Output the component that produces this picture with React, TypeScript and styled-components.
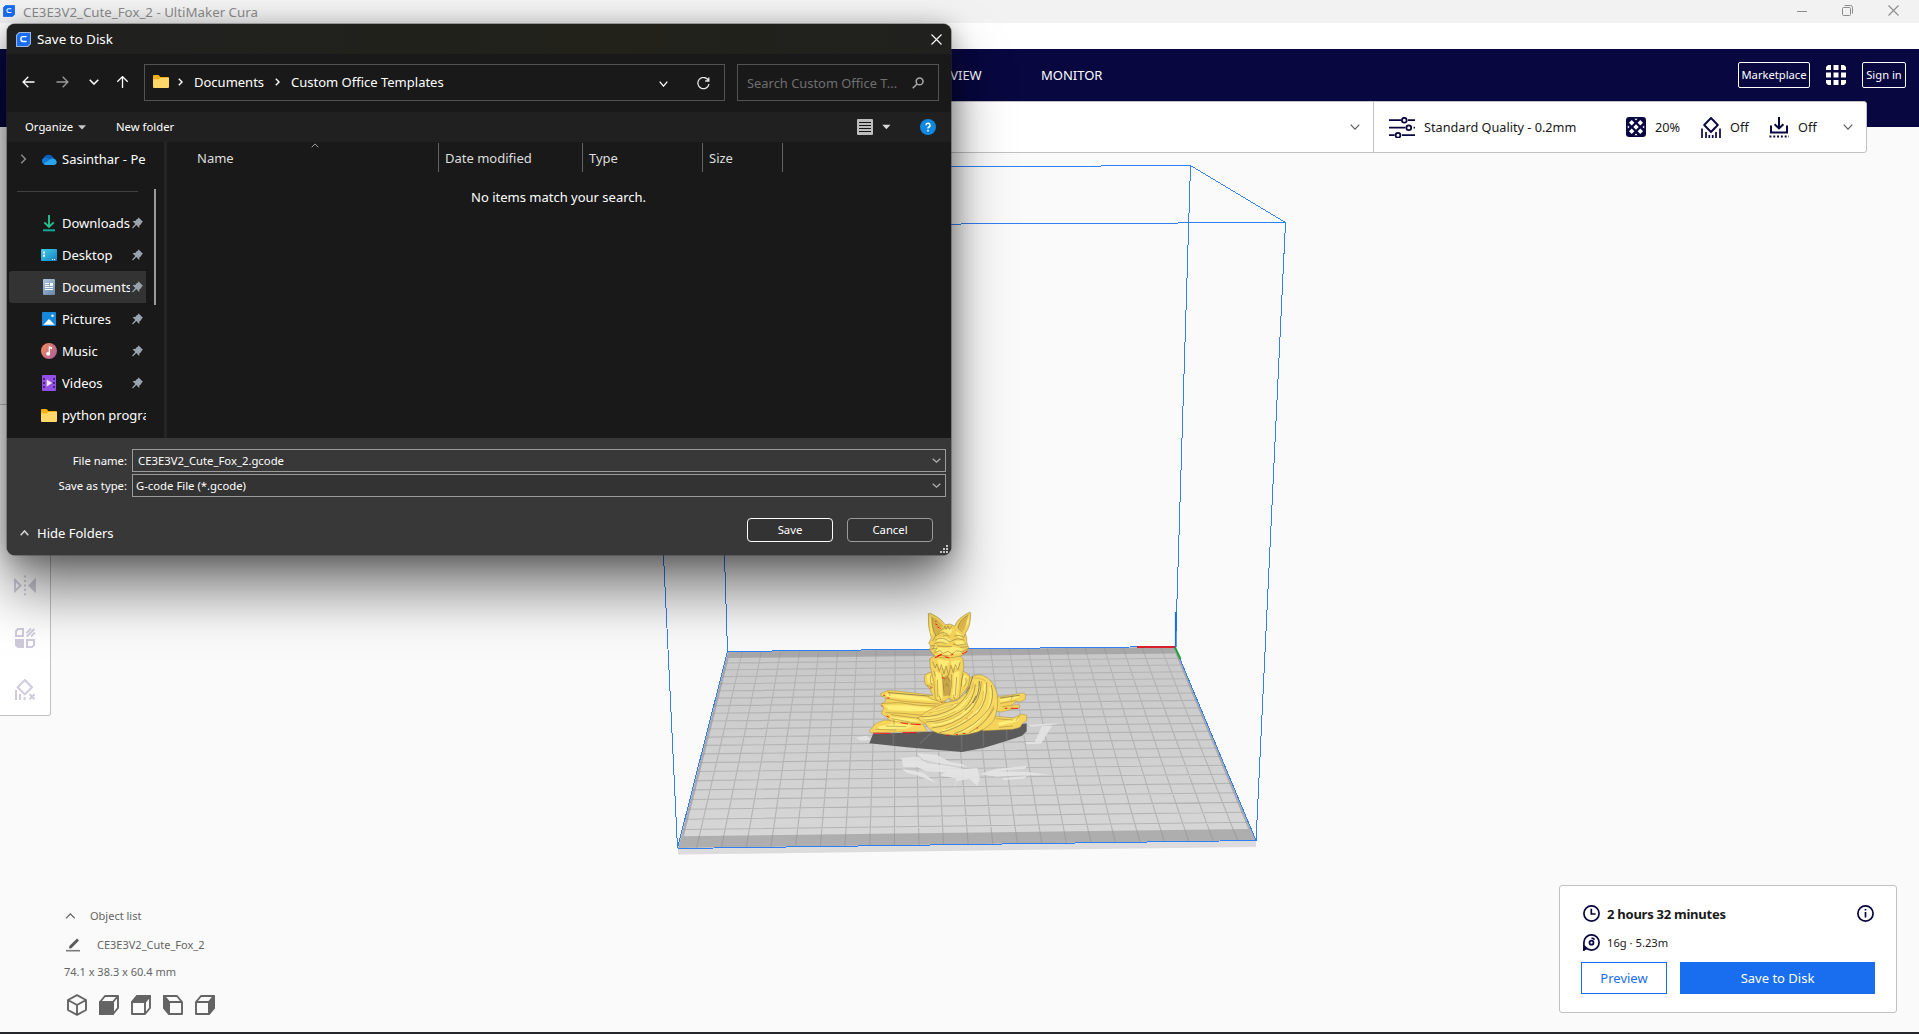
import React from "react";
import styled, { createGlobalStyle } from "styled-components";

const navy = "#08073f";
const blue = "#196ef0";
const line = "#c0c1c2";

const GlobalStyle = createGlobalStyle`
  * { box-sizing: border-box; }
  html, body { margin: 0; padding: 0; overflow: hidden; }
  body { font-family: "Noto Sans", "Open Sans", sans-serif; font-size: 13px; color: #191919; }
  svg { display: block; flex: none; }
  button { font-family: inherit; padding: 0; margin: 0; white-space: nowrap; }
`;

/* ---------- application window ---------- */

const Screen = styled.div`
  position: relative;
  width: 1919px;
  height: 1034px;
  display: flex;
  flex-direction: column;
  overflow: hidden;
  background: #fafafa;
`;

const WindowBar = styled.header`
  height: 23px;
  flex: none;
  display: flex;
  align-items: center;
  padding: 0 20px 2px 3px;
  background: #f2f2f2;
`;

const WindowTitle = styled.span`
  margin-left: 8px;
  padding-top: 2px;
  flex: 1;
  font-size: 13.3px;
  line-height: 18px;
  color: #8c8c8c;
  white-space: nowrap;
`;

const WindowControls = styled.div`
  display: flex;
  align-items: center;
  gap: 35px;
`;

const MenuStrip = styled.div`
  height: 26px;
  flex: none;
  background: #fff;
`;

const MainHeader = styled.nav`
  height: 52px;
  flex: none;
  display: flex;
  align-items: center;
  padding: 0 13px 0 927px;
  background: ${navy};
  color: #fff;
`;

const StageTab = styled.span<{ $width: number }>`
  width: ${(p) => p.$width}px;
  font-size: 13px;
  line-height: 18px;
`;

const HeaderActions = styled.div`
  margin-left: auto;
  display: flex;
  align-items: center;
  gap: 16px;
`;

const OutlineButton = styled.button<{ $width: number }>`
  width: ${(p) => p.$width}px;
  height: 26px;
  border: 1px solid #fff;
  border-radius: 2px;
  background: transparent;
  color: #fff;
  font-size: 11.2px;
  line-height: 16px;
`;

const Stage = styled.main`
  position: relative;
  flex: 1;
  display: flex;
  flex-direction: column;
  background: linear-gradient(${navy} 26px, #fafafa 26px);
`;

const SceneLayer = styled.svg`
  position: absolute;
  left: 0;
  top: 0;
`;

const ConfigBar = styled.section`
  position: relative;
  height: 52px;
  width: 1827px;
  margin-left: 40px;
  flex: none;
  display: flex;
  border: 1px solid ${line};
  border-radius: 3px;
  background: #fff;
`;

const MaterialPane = styled.div`
  width: 1333px;
  display: flex;
  align-items: center;
  justify-content: flex-end;
  padding-right: 13px;
  border-right: 1px solid ${line};
`;

const ProfilePane = styled.div`
  flex: 1;
  display: flex;
  align-items: center;
  padding: 0 13px 0 15px;
`;

const ProfileText = styled.span<{ $width: number; $gap: number }>`
  width: ${(p) => p.$width}px;
  margin-left: ${(p) => p.$gap}px;
  font-size: 12.7px;
  line-height: 18px;
  white-space: nowrap;
`;

const ChevronSlot = styled.div`
  margin-left: auto;
`;

const ToolPanel = styled.aside`
  position: relative;
  width: 51px;
  height: 312px;
  margin-top: 251px;
  display: flex;
  flex-direction: column;
  justify-content: flex-end;
  border: 1px solid ${line};
  border-left: none;
  border-radius: 0 3px 3px 0;
  background: #fff;
`;

const ToolButton = styled.div`
  height: 52px;
  display: flex;
  align-items: center;
  padding: 1px 0 0 14px;
`;

const StageFooter = styled.div`
  position: relative;
  margin-top: auto;
  display: flex;
  align-items: flex-end;
  justify-content: space-between;
  padding: 0 22px 19px 64px;
`;

const ObjectPanel = styled.section`
  display: flex;
  flex-direction: column;
  height: 128px;
  padding-top: 22px;
  color: #646464;
  font-size: 11px;
`;

const ObjectRow = styled.div<{ $height: number; $gap: number }>`
  height: ${(p) => p.$height}px;
  flex: none;
  display: flex;
  align-items: center;
  gap: ${(p) => p.$gap}px;
  line-height: 16px;
`;

const CubeRow = styled.div`
  display: flex;
  gap: 12px;
  margin: 16px 0 0 3px;
`;

const ActionPanel = styled.section`
  width: 338px;
  height: 128px;
  display: flex;
  flex-direction: column;
  padding: 13px 22px 18px 21px;
  border: 1px solid ${line};
  border-radius: 3px;
  background: #fff;
`;

const EstimateRow = styled.div<{ $size: number; $bold?: boolean }>`
  height: 29px;
  display: flex;
  align-items: center;
  padding-left: 2px;
  gap: 7px;
  font-size: ${(p) => p.$size}px;
  font-weight: ${(p) => (p.$bold ? 700 : 400)};
  letter-spacing: ${(p) => (p.$bold ? -0.25 : 0)}px;
`;

const ActionButtons = styled.div`
  display: flex;
  gap: 13px;
  margin: 5px -1px 0 0;
`;

const ActionButton = styled.button<{ $primary?: boolean }>`
  width: ${(p) => (p.$primary ? 195 : 86)}px;
  height: 32px;
  border: 1px solid ${blue};
  background: ${(p) => (p.$primary ? blue : "#fff")};
  color: ${(p) => (p.$primary ? "#fff" : blue)};
  font-size: 13px;
  line-height: 18px;
`;

const DesktopEdge = styled.div`
  height: 2px;
  flex: none;
  background: #24262c;
`;

/* ---------- save dialog ---------- */

const Dialog = styled.div`
  position: absolute;
  left: 7px;
  top: 24px;
  width: 944px;
  height: 531px;
  display: flex;
  flex-direction: column;
  border-radius: 8px;
  background: #191919;
  color: #fff;
  font-size: 13px;
  box-shadow: 0 0 0 1px rgba(60, 60, 60, 0.4), 0 36px 56px rgba(0, 0, 0, 0.5), 0 4px 26px rgba(0, 0, 0, 0.32);
`;

const DialogTitle = styled.div`
  height: 30px;
  flex: none;
  display: flex;
  align-items: center;
  padding: 0 9px 0 9px;
  border-radius: 8px 8px 0 0;
  background: linear-gradient(90deg, #202020 0%, #21211c 40%, #22221b 65%, #20201e 100%);
`;

const DialogName = styled.span`
  flex: 1;
  margin-left: 6px;
  font-size: 13.4px;
  line-height: 18px;
`;

const NavRow = styled.div`
  height: 58px;
  flex: none;
  display: flex;
  align-items: center;
  padding: 0 12px 1px 15px;
`;

const NavIcons = styled.div`
  width: 122px;
  display: grid;
  grid-template-columns: 34px 33px 27px 1fr;
  align-items: center;
  padding-bottom: 2px;
`;

const AddressBox = styled.div`
  width: 581px;
  height: 37px;
  display: flex;
  align-items: center;
  border: 1px solid #535353;
  padding: 0 14px 2px 8px;
`;

const Crumb = styled.span<{ $width: number }>`
  width: ${(p) => p.$width}px;
  margin-left: 11px;
  line-height: 18px;
  white-space: nowrap;
`;

const AddressTools = styled.div`
  margin-left: auto;
  display: flex;
  align-items: center;
  gap: 29px;
  padding-top: 4px;
`;

const SearchBox = styled.div`
  width: 202px;
  height: 37px;
  margin-left: 12px;
  display: flex;
  align-items: center;
  justify-content: space-between;
  border: 1px solid #535353;
  padding: 0 14px 0 9px;
  font-size: 12.9px;
  color: #6f6f6f;
  white-space: nowrap;
`;

const CommandBar = styled.div`
  height: 30px;
  flex: none;
  display: flex;
  align-items: center;
  padding: 0 15px 0 18px;
  background: #202020;
  font-size: 11.3px;
`;

const Command = styled.span<{ $width: number }>`
  width: ${(p) => p.$width}px;
  display: flex;
  align-items: center;
  gap: 5px;
  line-height: 16px;
`;

const CommandTools = styled.div`
  margin-left: auto;
  display: flex;
  align-items: center;
`;

const Browser = styled.div`
  height: 296px;
  flex: none;
  display: flex;
`;

const Sidebar = styled.div`
  width: 160px;
  display: flex;
  justify-content: space-between;
  border-right: 3px solid #242424;
`;

const PlaceList = styled.div`
  width: 139px;
  padding-left: 2px;
  overflow: hidden;
`;

const Place = styled.div<{ $active?: boolean }>`
  height: 32px;
  display: flex;
  align-items: center;
  padding-left: 32px;
  border-radius: 3px 0 0 3px;
  background: ${(p) => (p.$active ? "#333" : "transparent")};
`;

const CloudPlace = styled(Place)`
  padding-left: 11px;
  margin-top: 1px;
`;

const PlaceLabel = styled.span<{ $pinned?: boolean }>`
  width: ${(p) => (p.$pinned ? "68px" : "84px")};
  margin-left: 5px;
  flex: none;
  line-height: 18px;
  overflow: hidden;
  white-space: nowrap;
`;

const PinSlot = styled.span`
  margin-left: 2px;
`;

const PlaceDivider = styled.div`
  width: 121px;
  height: 1px;
  margin: 16px 0 15px 8px;
  background: #414141;
`;

const Scrollbar = styled.div`
  width: 2px;
  height: 116px;
  margin: 47px 8px 0 0;
  background: #9a9a9a;
`;

const FileList = styled.div`
  flex: 1;
`;

const Columns = styled.div`
  position: relative;
  height: 31px;
  display: flex;
  padding-top: 1px;
`;

const SortMark = styled.div`
  position: absolute;
  left: 144px;
  top: 1px;
`;

const Column = styled.div<{ $width: number; $pad: number }>`
  width: ${(p) => p.$width}px;
  height: 29px;
  display: flex;
  align-items: center;
  padding-left: ${(p) => p.$pad}px;
  border-right: 1px solid #636363;
  color: #dedede;
`;

const EmptyNote = styled.p`
  margin: 15px 0 0 304px;
  line-height: 18px;
`;

const SaveForm = styled.div`
  flex: 1;
  display: flex;
  flex-direction: column;
  padding: 11px 5px 0 0;
  border-radius: 0 0 8px 8px;
  background: #383838;
`;

const FieldRow = styled.div`
  height: 23px;
  margin-bottom: 2px;
  display: flex;
  align-items: center;
  font-size: 11.3px;
`;

const FieldLabel = styled.label`
  width: 125px;
  padding-right: 5px;
  text-align: right;
  line-height: 16px;
`;

const Field = styled.div<{ $pad: number; $lift: number; $fill: string }>`
  flex: 1;
  height: 23px;
  display: flex;
  align-items: center;
  justify-content: space-between;
  padding: 0 4px ${(p) => p.$lift}px ${(p) => p.$pad}px;
  border: 1px solid #9b9b9b;
  background: ${(p) => p.$fill};
`;

const FormActions = styled.div`
  height: 24px;
  margin-top: 19px;
  display: flex;
  align-items: center;
  padding: 0 13px;
`;

const HideFolders = styled.div`
  flex: 1;
  display: flex;
  align-items: center;
  gap: 8px;
  padding-top: 6px;
`;

const DialogButton = styled.button<{ $default?: boolean }>`
  width: 86px;
  height: 24px;
  margin-left: 14px;
  border: 1px solid ${(p) => (p.$default ? "#fff" : "#9b9b9b")};
  border-radius: 4px;
  background: #333;
  color: #fff;
  font-size: 11.3px;
  line-height: 16px;
`;

const GripRow = styled.div`
  display: flex;
  justify-content: flex-end;
  padding: 3px 0 0;
  margin-right: -2px;
`;

/* ---------- icons ---------- */

type ChevronProps = { w?: number; h?: number; color?: string; weight?: number; up?: boolean };
const Chevron = ({ w = 10, h = 6, color = "#5a5a5a", weight = 1.2, up }: ChevronProps) => (
  <svg width={w} height={h} viewBox={`0 0 ${w} ${h}`} fill="none" stroke={color} strokeWidth={weight}>
    <path d={up ? `M.7 ${h - 0.7}L${w / 2} .9L${w - 0.7} ${h - 0.7}` : `M.7 .7L${w / 2} ${h - 0.9}L${w - 0.7} .7`} />
  </svg>
);

const CrumbArrow = () => (
  <svg width="5" height="8" viewBox="0 0 5 8" fill="none" stroke="#fff" strokeWidth="1.4">
    <path d="M.8 .8L4 4L.8 7.2" />
  </svg>
);

const CuraLogo = ({ size, rim }: { size: number; rim: string }) => (
  <svg width={size} height={size} viewBox="0 0 14 14">
    <path d="M3 .5H13.5V11L11 13.5H.5V3z" fill="#196ef0" stroke={rim} strokeWidth="1" />
    <path d="M9.8 4.3H6.6Q4.6 4.3 4.6 6.2V6.8Q4.6 8.8 6.6 8.8H9.8" fill="none" stroke="#fff" strokeWidth="1.3" />
  </svg>
);

const CloseIcon = ({ color }: { color: string }) => (
  <svg width="11" height="11" viewBox="0 0 11 11" stroke={color} strokeWidth="1.1">
    <path d="M.5 .5L10.5 10.5M10.5 .5L.5 10.5" />
  </svg>
);

const Arrow = ({ color, turn }: { color: string; turn: number }) => (
  <svg width="13" height="12" viewBox="0 0 13 12" fill="none" stroke={color} strokeWidth="1.3">
    <path transform={`rotate(${turn} 6.5 6)`} d="M12.5 6H1.2M6.3 .8L1.1 6L6.3 11.2" />
  </svg>
);

const FolderIcon = () => (
  <svg width="16" height="13" viewBox="0 0 16 13">
    <path d="M0 1Q0 0 1 0H5.5L7.4 2H15Q16 2 16 3V6H0z" fill="#f5b010" />
    <path d="M0 4.2H5.8L7.4 2.9H16V12Q16 13 15 13H1Q0 13 0 12z" fill="#ffd869" />
  </svg>
);

const PinIcon = () => (
  <svg width="11" height="12" viewBox="0 0 11 12" fill="#99a3ab">
    <path d="M6.4 .2L10.9 4.8L9.6 5.8L9.2 7.2L7.6 8.1L7.2 10.9L4.3 8L.9 11.4L.1 10.6L3.3 7.1L.5 4.2L3.7 3.7L4.6 2.2L6 1.8z" />
  </svg>
);

const placeIcons: Record<string, React.ReactNode> = {
  Downloads: (
    <svg width="16" height="17" viewBox="0 0 16 17" fill="none" stroke="#24c08e" strokeWidth="1.9">
      <path d="M8 0V12M3.3 7.4L8 12L12.7 7.4" />
      <path d="M2 15.3H14" stroke="#16a896" strokeWidth="2" />
    </svg>
  ),
  Desktop: (
    <svg width="16" height="12" viewBox="0 0 16 12">
      <defs>
        <linearGradient id="desk" x1="0" y1="0" x2="1" y2="1">
          <stop offset="0" stopColor="#3fd0e6" />
          <stop offset="1" stopColor="#1480c8" />
        </linearGradient>
      </defs>
      <rect width="16" height="12" rx="1" fill="url(#desk)" />
      <path d="M2 2.5h2v2h-2zM2 5.8h2v2h-2zM11 10h1v1h-1zM13 10h1v1h-1z" fill="#fff" />
    </svg>
  ),
  Documents: (
    <svg width="16" height="16" viewBox="0 0 16 16">
      <defs>
        <linearGradient id="docs" x1="0" y1="0" x2="0.6" y2="1">
          <stop offset="0" stopColor="#b4c8dc" />
          <stop offset="1" stopColor="#6f90b4" />
        </linearGradient>
      </defs>
      <rect x="2" width="12" height="16" rx="1" fill="url(#docs)" />
      <path d="M4 4.5h4M4 6.5h4M4 8.5h8M4 10.5h8" stroke="#fff" strokeWidth="1" />
      <path d="M9 4h3v3h-3z" fill="#fff" />
    </svg>
  ),
  Pictures: (
    <svg width="16" height="14" viewBox="0 0 16 14">
      <rect x="1" width="14" height="14" rx="1" fill="#1687d9" />
      <path d="M2.3 12.8L8 7L13.7 12.8z" fill="#fff" />
      <circle cx="11.5" cy="3.7" r="1.3" fill="#e6f5ff" />
    </svg>
  ),
  Music: (
    <svg width="16" height="16" viewBox="0 0 16 16">
      <defs>
        <linearGradient id="music" x1="0" y1="0.2" x2="1" y2="0.9">
          <stop offset="0" stopColor="#f08a5c" />
          <stop offset="1" stopColor="#ab5c9e" />
        </linearGradient>
      </defs>
      <circle cx="8" cy="8" r="8" fill="url(#music)" />
      <path d="M7.7 3L11 4.2V6.2L9 5.6V11H7.7z" fill="#fff" />
      <circle cx="7.2" cy="10.8" r="2" fill="#fff" />
    </svg>
  ),
  Videos: (
    <svg width="16" height="16" viewBox="0 0 16 16">
      <rect x="1" width="14" height="16" rx="1" fill="#9350e4" />
      <path d="M2 3h2v2h-2zM2 7h2v2h-2zM2 11h2v2h-2zM12 3h2v2h-2zM12 7h2v2h-2zM12 11h2v2h-2z" fill="#4c2290" />
      <path d="M5.7 4.4L11.2 8L5.7 11.6z" fill="#f4eaff" />
    </svg>
  ),
  "python progra": <FolderIcon />,
};

const CloudIcon = () => (
  <svg width="16" height="11" viewBox="0 0 16 11">
    <path d="M3 10A3 3 0 0 1 2.4 4.6A5.4 5.4 0 0 1 12 3L14 6L8 10z" fill="#0a5fb8" />
    <path d="M3 10A3.3 3.3 0 0 1 2.3 4.3Q6 3 9 5.5L14 9z" fill="#1278d4" />
    <path d="M4 11L2.3 9.9L10 4.8Q14.5 3.9 15.5 7.2Q16.2 10 13.5 11z" fill="#2aa4ee" />
  </svg>
);

const SlidersIcon = () => (
  <svg width="26" height="21" viewBox="0 0 26 21" fill="none" stroke={navy} strokeWidth="1.8">
    <path d="M0 3.2H12.2M19 3.2H26M0 10.7H16.4M24.6 10.7H26M0 18.2H5.6M13 18.2H26" />
    <circle cx="15.3" cy="3.2" r="2.4" />
    <circle cx="19.8" cy="10.7" r="2.4" />
    <circle cx="9" cy="18.2" r="2.4" />
  </svg>
);

const InfillIcon = () => (
  <svg width="20" height="20" viewBox="0 0 20 20">
    <rect x="0" y="0" width="20" height="20" rx="3.2" fill={navy} />
    <path
      d="M5.7 3L8.4 5.7L5.7 8.4L3 5.7zM14.3 3L17 5.7L14.3 8.4L11.6 5.7zM10 7.3L12.7 10L10 12.7L7.3 10zM5.7 11.6L8.4 14.3L5.7 17L3 14.3zM14.3 11.6L17 14.3L14.3 17L11.6 14.3zM8.4 1.8H11.6L10 3.6zM8.4 18.2H11.6L10 16.4zM1.8 8.4V11.6L3.6 10zM18.2 8.4V11.6L16.4 10z"
      fill="#fff"
    />
  </svg>
);

const SupportIcon = () => (
  <svg width="20" height="21" viewBox="0 0 20 21" fill="none" stroke={navy} strokeWidth="1.9">
    <path d="M10 1L16.8 8L10 15L3.2 8z" strokeLinejoin="round" />
    <path d="M1 11.5V21M19 11.5V21M5 15V21M15 15V21M8.3 18V21M11.7 18V21" strokeWidth="1.7" />
  </svg>
);

const AdhesionIcon = () => (
  <svg width="20" height="21" viewBox="0 0 20 21" fill="none" stroke={navy} strokeWidth="2">
    <path d="M10 0V11M5.6 7.2L10 11.4L14.4 7.2M2 8.5V15.6H18V8.5" />
    <path d="M.5 19.6H20" strokeDasharray="1.9 1.9" />
  </svg>
);

const AppsIcon = () => (
  <svg width="20" height="20" viewBox="0 0 20 20" fill="#fff">
    <path d="M2 0H5V5H0V2zM7.5 0h5v5h-5zM15 0H18L20 2V5H15zM0 7.5h5v5H0zM7.5 7.5h5v5h-5zM15 7.5h5v5h-5zM0 15H5V20H2L0 18zM7.5 15h5v5h-5zM15 15H20V18L18 20H15z" />
  </svg>
);

const toolColor = "#cfcbdc";
const MirrorIcon = () => (
  <svg width="22" height="21" viewBox="0 0 22 21" fill="none" stroke={toolColor} strokeWidth="1.8">
    <path d="M1 5V16L6.6 10.5z" />
    <path d="M21 5V16L15.4 10.5z" fill={toolColor} />
    <path d="M11 .6V20.6" strokeDasharray="2 2.4" />
  </svg>
);
const MultiplyIcon = () => (
  <svg width="22" height="20" viewBox="0 0 22 20" fill="none" stroke={toolColor} strokeWidth="2">
    <path d="M4 1H9V8H2V3z" />
    <path d="M3.6 11H10V20H3.6L1 17.4V11z" fill={toolColor} stroke="none" />
    <path d="M13 12H20V17L18 19H13z" />
    <path d="M12.4 5.2L17 .6M12.6 8.6L20.4 1M17 8.4L20.8 4.8" strokeWidth="1.9" />
  </svg>
);
const BlockerIcon = () => (
  <svg width="22" height="21" viewBox="0 0 22 21" fill="none" stroke={toolColor} strokeWidth="2">
    <path d="M10.8 1L18 8.2L10.8 15.4L3.6 8.2z" strokeLinejoin="round" />
    <path d="M2 11V21M6 15V21M10.6 18V21M15.6 15.2L20.6 20.2M20.6 15.2L15.6 20.2" />
  </svg>
);

const PencilIcon = () => (
  <svg width="14" height="14" viewBox="0 0 14 14">
    <path d="M3 10.6L3.4 8L11 .6L13 2.6L5.4 10.2z" fill="#5a5a5a" />
    <path d="M0 12.7H14" stroke="#7c7c7c" strokeWidth="1.6" />
  </svg>
);

const CubeFrame = ({ face, flip }: { face: "iso" | "front" | "top" | "right"; flip?: boolean }) => (
  <svg width="20" height="22" viewBox="0 0 20 22" fill="none" stroke="#646464" strokeWidth="1.9" strokeLinejoin="round">
    {face === "iso" ? (
      <path d="M10 1.2L19 6V16L10 20.8L1 16V6zM1 6L10 11L19 6M10 11V20.8" />
    ) : (
      <g transform={flip ? "matrix(-1 0 0 1 20 0)" : undefined}>
        <path d="M1 8L6 2H19V14L14 20H1zM1 8H14M14 8V20M14 8L19 2" />
        {face === "front" && <path d="M1 8H14V20H1z" fill="#646464" />}
        {face === "top" && <path d="M1 8L6 2H19L14 8z" fill="#646464" />}
        {face === "right" && <path d="M14 8L19 2V14L14 20z" fill="#646464" />}
      </g>
    )}
  </svg>
);

const ClockIcon = () => (
  <svg width="17" height="17" viewBox="0 0 17 17" fill="none" stroke={navy} strokeWidth="1.7">
    <circle cx="8.5" cy="8.5" r="7.6" />
    <path d="M8.3 3.8V9H12.6" />
  </svg>
);
const SpoolIcon = () => (
  <svg width="17" height="17" viewBox="0 0 17 17" fill="none" stroke={navy} strokeWidth="1.7">
    <path d="M.9 17V8.5A7.6 7.6 0 1 1 8.5 16.1Q5 16 2.6 13.4V16" />
    <circle cx="8.5" cy="8.7" r="2" />
    <path d="M8.5 4.2A4.5 4.5 0 0 1 11.6 5.6" />
  </svg>
);
const InfoIcon = () => (
  <svg width="17" height="17" viewBox="0 0 17 17" fill="none" stroke={navy} strokeWidth="1.7">
    <circle cx="8.5" cy="8.5" r="7.6" />
    <path d="M8.5 7V12.6M8.5 3.9V5.6" />
  </svg>
);

/* ---------- 3D view ---------- */

type Pt = [number, number];
const bed = 235;
const corners: Pt[] = [
  [728, 651.5],
  [1175, 647],
  [1256, 840.5],
  [678, 848],
];

/* Perspective map from bed millimetres to screen pixels. */
const project = (() => {
  const [[x0, y0], [x1, y1], [x2, y2], [x3, y3]] = corners;
  const dx1 = x1 - x2, dx2 = x3 - x2, sx = x0 - x1 + x2 - x3;
  const dy1 = y1 - y2, dy2 = y3 - y2, sy = y0 - y1 + y2 - y3;
  const det = dx1 * dy2 - dx2 * dy1;
  const g = (sx * dy2 - dx2 * sy) / det;
  const h = (dx1 * sy - sx * dy1) / det;
  return (mx: number, my: number): Pt => {
    const u = mx / bed, v = my / bed, w = g * u + h * v + 1;
    return [
      ((x1 - x0 + g * x1) * u + (x3 - x0 + h * x3) * v + x0) / w,
      ((y1 - y0 + g * y1) * u + (y3 - y0 + h * y3) * v + y0) / w,
    ];
  };
})();

const poly = (pts: Pt[]) => pts.map(([x, y]) => `${x.toFixed(1)},${y.toFixed(1)}`).join(" ");
const strip = (x0: number, y0: number, x1: number, y1: number) =>
  poly([project(x0, y0), project(x1, y0), project(x1, y1), project(x0, y1)]);
const segment = (a: Pt, b: Pt) => `M${a[0].toFixed(1)} ${a[1].toFixed(1)}L${b[0].toFixed(1)} ${b[1].toFixed(1)}`;
const ticks = Array.from({ length: 23 }, (_, i) => 7.5 + i * 10);
const gridPath = ticks
  .map((t) => segment(project(t, 0), project(t, bed)) + (t > 10 && t < 225 ? segment(project(0, t), project(bed, t)) : ""))
  .join("");

const FoxShadow = () => (
  <g transform="translate(840 590) scale(.33333)">
    <g fill="#e6e6e6" opacity="0.85">
      <path d="M48 443L80 437L92 450L62 452zM560 404L660 400L632 406L574 410zM606 408H636L603 461L584 456zM556 456L603 454V461L560 463z" />
      <path d="M184 504L232 500L262 520L300 524L372 536L364 548L300 546L260 544L232 532L190 530zM230 490L290 494L330 516L364 522L384 532L300 520L250 510zM330 540L412 534L420 566L412 588L388 566L350 574L340 600L350 566L300 556zM420 552L470 536L560 528L556 536L470 544L560 546L628 554L540 556L470 560zM486 564L560 558L552 566L490 570zM186 536L250 548L290 580L238 558L200 548z" />
    </g>
    <path d="M99 432L88 460L200 472L366 486L430 474L470 462L545 438L560 424V400L480 412L250 426z" fill="#5b5b5b" />
    <path d="M240 460L275 428M365 428V484M160 428V466M430 420V470M500 415V450" stroke="#6a6a6a" strokeWidth="5" />
  </g>
);

const Fox = () => (
  <g transform="translate(866 606) scale(.33333)" strokeLinecap="round" strokeLinejoin="round">
    {/* logs */}
    <g fill="#f6d45c" stroke="#a8903f" strokeWidth="1.5">
      <path d="M392 274L430 268L470 261L478 264V280L462 288L452 286L436 298L460 296V306L430 312L404 318L380 312z" />
      <path d="M350 350L384 330L440 336L468 324L482 328V344L470 352L462 364L440 370L350 374z" />
      <path d="M45 262L66 253L100 256L190 266L240 290L220 350L160 356L76 348L62 334L46 322L54 306L44 296L60 284L58 274L46 270z" />
      <path d="M10 374L30 352L56 342L90 346L170 354L184 376L110 378L14 380z" />
    </g>
    <g fill="#ffee78">
      <path d="M54 263L110 266L190 276L210 286L120 280L66 272zM54 298L120 298L200 306L196 314L130 316L70 312zM70 332L150 340L160 348L90 346zM36 362L80 352L150 358L120 368L40 370zM400 280L464 268L450 278L404 288zM396 350L460 336L456 346L400 360z" />
    </g>
    <g fill="none" stroke="#a38a3e" strokeWidth="1.8">
      <path d="M60 277L110 286L180 292L220 294M48 292L100 290L160 298L210 300M60 320L110 322L170 328M76 326L120 332L168 338M78 338L130 348M404 292L450 284M410 302L436 298M390 338L440 342M400 364L440 360M30 370L90 372M60 360L120 362M84 342V356M66 256L72 268M440 268L436 280M460 330L450 344" />
      <path d="M70 260L186 270M404 276L460 268" stroke="#857647" strokeWidth="2.4" />
    </g>

    {/* haunches, chest and legs */}
    <g fill="#f5d35a" stroke="#97823f" strokeWidth="1.5">
      <path d="M198 198Q176 200 175 216Q174 236 190 246L200 268L186 270L192 278L236 290L240 240z" />
      <path d="M284 194Q306 198 312 214Q316 234 300 250L280 276L252 286V240z" />
      <path d="M192 160Q196 150 220 148H270Q290 150 291 160Q296 180 290 204L282 262L280 276L262 284L248 276L240 284L220 288L208 278L204 230L196 196Q190 176 192 160z" />
    </g>
    <path d="M232 214L246 206L254 226L252 268L236 270L230 240z" fill="#c9a648" />
    <path d="M208 196L226 204L228 246L230 276L216 280L212 240zM264 200L280 196L278 240L272 272L258 274L262 236zM214 160L250 164L240 190L220 184zM254 166L282 162L276 190L260 184zM182 208L196 204L200 232L186 230zM292 204L306 212L300 236L288 240z" fill="#ffeb74" />
    <path
      d="M200 168L208 186L212 174L220 196L226 176L234 204L240 180L248 208L254 178L262 200L268 176L276 192L282 170M204 196L208 210M228 204L232 236L234 270M256 206L256 240L250 270M214 222L216 272M272 214L268 268M196 206Q188 220 198 238M292 204Q284 222 286 240M184 238L200 244M236 222L244 214L250 224M238 240L242 232L248 242M220 270L224 282M262 268L266 280M300 216Q304 230 296 240"
      fill="none"
      stroke="#8f7c40"
      strokeWidth="1.8"
    />

    {/* head */}
    <path
      d="M187 24L194 22Q222 34 238 56Q252 50 266 60Q274 36 312 18L314 24Q314 62 298 82Q304 96 302 108L308 126L298 142L284 150L262 154L236 156L208 152L190 130L196 120L188 112L196 96Q184 60 187 24z"
      fill="#f5d35a"
      stroke="#97823f"
      strokeWidth="1.5"
    />
    <path d="M198 34Q216 40 230 60L218 78L208 88Q196 64 198 34zM306 28Q286 38 276 64L290 76Q304 56 306 28z" fill="#dcb64c" />
    <path d="M190 30L196 40L200 88L194 82zM232 72Q246 64 262 70L254 84L234 86zM268 74L284 84L290 98L276 94zM212 96L236 92L258 104L238 114L214 108zM266 104L290 104L298 118L270 116zM204 124L240 126L262 122L290 128L284 142L240 146L212 140zM310 28L308 50L298 66L302 44z" fill="#ffed78" />
    <path
      d="M198 34Q196 66 210 90Q220 74 238 62M306 28Q280 40 276 66L288 78M236 62L240 70L246 60L250 70L256 62M216 86Q228 74 244 84M208 102Q224 92 240 100Q250 112 262 102Q276 94 294 102M206 112Q224 104 240 112M232 90Q242 82 250 92M266 90Q280 84 290 92M192 120L206 118L200 128M194 130L214 126L206 136M206 140L222 134L232 142L246 136L258 144L272 134L290 138L304 128M222 148L246 150M262 114L276 118L300 114M284 124L304 122M214 120L256 122M210 88L200 104M298 84L292 96"
      fill="none"
      stroke="#8f7c40"
      strokeWidth="1.8"
    />

    {/* tail */}
    <path
      d="M156 336Q176 318 206 304Q240 286 272 284Q298 268 306 244L312 216Q330 202 350 208Q384 222 393 262Q400 304 384 342Q360 376 310 384Q262 392 216 382Q186 372 178 352Q164 346 156 336z"
      fill="#f8d960"
      stroke="#97823f"
      strokeWidth="1.5"
    />
    <g fill="none" stroke="#ffef7c" strokeWidth="5">
      <path d="M176 338Q226 340 276 308Q308 284 318 250M196 358Q254 354 300 318Q334 286 338 240M232 374Q286 362 330 320Q358 286 356 236M290 378Q340 356 366 308Q378 276 372 246M200 320Q234 304 268 296" />
    </g>
    <g fill="none" stroke="#8f7c40" strokeWidth="2">
      <path d="M166 332Q214 334 264 306Q300 282 312 244M180 348Q236 348 290 312Q324 282 328 236M198 366Q262 360 310 318Q344 282 346 228M220 380Q282 368 336 320Q366 282 362 230M264 384Q330 362 370 306Q386 272 376 238M310 380Q362 352 384 306" />
    </g>
    <g fill="none" stroke="#c6a246" strokeWidth="1.8">
      <path d="M172 342Q220 342 268 316M210 310Q250 298 280 290M188 322Q230 314 262 298M206 352Q250 346 288 322M250 372Q300 352 330 322M320 216Q340 212 358 224M300 280Q318 262 322 230M334 366Q368 340 382 300M240 368Q290 350 320 316M352 256Q354 286 334 310" />
    </g>
    <path d="M300 262Q314 240 320 212M322 290Q340 268 340 226M298 312Q320 296 330 270" fill="none" stroke="#7d7248" strokeWidth="2.8" />

    {/* overhang markers */}
    <path
      d="M22 382H74M110 380H152M104 350L126 354M134 354L164 356M416 307H424M434 307H456M206 156L226 146M214 150L228 144M236 152L250 156M254 148L262 144M288 144L304 136M208 46H211M208 54L214 56M214 62L220 66M222 68H223M228 214L236 218M192 246H197M52 268H57M64 276H70M46 300H50M62 330L70 334M226 290H229M242 388H248M270 386H276M290 382H298M302 338H304M332 366H336"
      fill="none"
      stroke="#fa1010"
      strokeWidth="2.8"
      strokeLinecap="butt"
    />
  </g>
);

const BuildScene = () => (
  <SceneLayer width="1919" height="931" viewBox="0 101 1919 931">
    <defs>
      <linearGradient id="plate" x1="0" y1="0" x2="0" y2="1">
        <stop offset="0" stopColor="#c8c8c8" />
        <stop offset="1" stopColor="#d7d7d7" />
      </linearGradient>
    </defs>
    <polygon points="678,848 1256,840 1256,847 678,854.5" fill="#dcdcdc" />
    <polygon points={poly(corners)} fill="url(#plate)" />
    <path d={gridPath} stroke="#b4b4b4" strokeWidth="1.15" fill="none" />
    <g fill="#8e8e8e" opacity="0.55">
      <polygon points={strip(0, 0, 235, 10)} />
      <polygon points={strip(0, 224, 235, 235)} />
      <polygon points={strip(0, 10, 1.2, 224)} />
      <polygon points={strip(233.8, 10, 235, 224)} />
    </g>
    <g stroke="#2f80f5" strokeWidth="1" fill="none" shapeRendering="crispEdges">
      <path d="M660 168.5L1190.5 165.5L1285.5 222.5L640 225.5M1190.5 165.5L1175.5 647M1285.5 222.5L1256 841M663.5 555L677.5 848M724.5 555L727.5 651.5" />
      <path d="M727.5 651.5L1175 646.5M678 848.5L1256 840.5M727.5 651.5L677.5 848M1175 647L1256 840.5" />
    </g>
    <path d="M1175.8 647V612" stroke="#196ef0" strokeWidth="1.8" />
    <path d="M1137 647H1175" stroke="#d8202c" strokeWidth="1.8" />
    <path d="M1175 647.5L1180.5 659" stroke="#20a040" strokeWidth="2" />
    <FoxShadow />
    <Fox />
  </SceneLayer>
);

/* ---------- page ---------- */

const pinned = ["Downloads", "Desktop", "Documents", "Pictures", "Music", "Videos"];

const SaveDialog = () => (
  <Dialog>
    <DialogTitle>
      <CuraLogo size={15} rim="#9fb4d8" />
      <DialogName>Save to Disk</DialogName>
      <CloseIcon color="#fff" />
    </DialogTitle>
    <NavRow>
      <NavIcons>
        <Arrow color="#fff" turn={0} />
        <Arrow color="#9a9a9a" turn={180} />
        <Chevron w={10} h={6} color="#fff" weight={1.5} />
        <Arrow color="#fff" turn={90} />
      </NavIcons>
      <AddressBox>
        <FolderIcon />
        <svg width="9" height="1" />
        <CrumbArrow />
        <Crumb $width={70}>Documents</Crumb>
        <svg width="11" height="1" />
        <CrumbArrow />
        <Crumb $width={160}>Custom Office Templates</Crumb>
        <AddressTools>
          <Chevron w={9} h={6} color="#fff" weight={1.3} />
          <svg width="13" height="13" viewBox="0 0 13 13" fill="none" stroke="#e8e8e8" strokeWidth="1.3">
            <path d="M11.4 3.4A5.6 5.6 0 1 0 12 7M11.8 .4V4H8.2" />
          </svg>
        </AddressTools>
      </AddressBox>
      <SearchBox>
        Search Custom Office T...
        <svg width="12" height="12" viewBox="0 0 12 12" fill="none" stroke="#a6a6a6" strokeWidth="1.6">
          <circle cx="7.6" cy="4.4" r="3.4" />
          <path d="M5 7L.7 11.3" />
        </svg>
      </SearchBox>
    </NavRow>
    <CommandBar>
      <Command $width={91}>
        Organize
        <svg width="8" height="5" viewBox="0 0 8 5" fill="#c8c8c8"><path d="M0 .3H8L4 4.6z" /></svg>
      </Command>
      <Command $width={80}>New folder</Command>
      <CommandTools>
        <svg width="79" height="16" viewBox="0 0 79 16">
          <rect width="16" height="16" rx="1" fill="#bdbdbd" />
          <path d="M2 3.5H14M2 6.5H14M2 9.5H14M2 12.5H14" stroke="#151515" strokeWidth="1" />
          <path d="M25.3 5.8H33.5L29.4 10.2z" fill="#d8d8d8" />
          <circle cx="71" cy="8" r="8" fill="#1088de" />
          <path d="M69 6.2A2 2 0 1 1 71.4 8.2Q71 8.6 71 9.6M71 10.8V12.4" fill="none" stroke="#fff" strokeWidth="1.5" />
        </svg>
      </CommandTools>
    </CommandBar>
    <Browser>
      <Sidebar>
        <PlaceList>
          <CloudPlace>
            <svg width="21" height="10" viewBox="0 0 21 10" fill="none" stroke="#8a8a8a" strokeWidth="1.5"><path d="M1.2 .8L5.4 5L1.2 9.2" /></svg>
            <CloudIcon />
            <PlaceLabel>Sasinthar - Pe</PlaceLabel>
          </CloudPlace>
          <PlaceDivider />
          {pinned.map((name) => (
            <Place key={name} $active={name === "Documents"}>
              {placeIcons[name]}
              <PlaceLabel $pinned>{name}</PlaceLabel>
              <PinSlot><PinIcon /></PinSlot>
            </Place>
          ))}
          <Place>
            {placeIcons["python progra"]}
            <PlaceLabel>python progra</PlaceLabel>
          </Place>
        </PlaceList>
        <Scrollbar />
      </Sidebar>
      <FileList>
        <Columns>
          <SortMark><Chevron w={8} h={5} up color="#a0a0a0" weight={1} /></SortMark>
          <Column $width={272} $pad={30}>Name</Column>
          <Column $width={144} $pad={6}>Date modified</Column>
          <Column $width={120} $pad={6}>Type</Column>
          <Column $width={80} $pad={6}>Size</Column>
        </Columns>
        <EmptyNote>No items match your search.</EmptyNote>
      </FileList>
    </Browser>
    <SaveForm>
      <FieldRow>
        <FieldLabel>File name:</FieldLabel>
        <Field $pad={5} $lift={1} $fill="#383838">CE3E3V2_Cute_Fox_2.gcode<Chevron w={9} h={5} color="#b4b4b4" /></Field>
      </FieldRow>
      <FieldRow>
        <FieldLabel>Save as type:</FieldLabel>
        <Field $pad={3} $lift={0} $fill="#333">G-code File (*.gcode)<Chevron w={9} h={5} color="#b4b4b4" /></Field>
      </FieldRow>
      <FormActions>
        <HideFolders>
          <Chevron w={9} h={6} up color="#d0d0d0" weight={1.6} />
          Hide Folders
        </HideFolders>
        <DialogButton $default>Save</DialogButton>
        <DialogButton>Cancel</DialogButton>
      </FormActions>
      <GripRow>
        <svg width="8" height="8" viewBox="0 0 8 8" fill="#c4c4c4">
          <path d="M6 0h2v2h-2zM3 3h2v2h-2zM6 3h2v2h-2zM0 6h2v2h-2zM3 6h2v2h-2zM6 6h2v2h-2z" />
        </svg>
      </GripRow>
    </SaveForm>
  </Dialog>
);

export default function App() {
  return (
    <>
      <GlobalStyle />
      <Screen>
        <WindowBar>
          <CuraLogo size={12} rim="#196ef0" />
          <WindowTitle>CE3E3V2_Cute_Fox_2 - UltiMaker Cura</WindowTitle>
          <WindowControls>
            <svg width="10" height="10" viewBox="0 0 10 10" stroke="#8c8c8c"><path d="M0 5.5H10" /></svg>
            <svg width="11" height="11" viewBox="0 0 11 11" fill="none" stroke="#8c8c8c">
              <rect x=".5" y="2.5" width="8" height="8" rx="1" />
              <path d="M2.5 .5H8.5Q10.5 .5 10.5 2.5V8.5" />
            </svg>
            <CloseIcon color="#8c8c8c" />
          </WindowControls>
        </WindowBar>
        <MenuStrip />
        <MainHeader>
          <StageTab $width={114}>PREVIEW</StageTab>
          <StageTab $width={70}>MONITOR</StageTab>
          <HeaderActions>
            <OutlineButton $width={72}>Marketplace</OutlineButton>
            <AppsIcon />
            <OutlineButton $width={44}>Sign in</OutlineButton>
          </HeaderActions>
        </MainHeader>
        <Stage>
          <BuildScene />
          <ConfigBar>
            <MaterialPane><Chevron /></MaterialPane>
            <ProfilePane>
              <SlidersIcon />
              <ProfileText $width={193} $gap={9}>Standard Quality - 0.2mm</ProfileText>
              <svg width="9" height="1" />
              <InfillIcon />
              <ProfileText $width={46} $gap={9}>20%</ProfileText>
              <SupportIcon />
              <ProfileText $width={39} $gap={9}>Off</ProfileText>
              <AdhesionIcon />
              <ProfileText $width={30} $gap={9}>Off</ProfileText>
              <ChevronSlot><Chevron /></ChevronSlot>
            </ProfilePane>
          </ConfigBar>
          <ToolPanel>
            <ToolButton><MirrorIcon /></ToolButton>
            <ToolButton><MultiplyIcon /></ToolButton>
            <ToolButton><BlockerIcon /></ToolButton>
          </ToolPanel>
          <StageFooter>
            <ObjectPanel>
              <ObjectRow $height={18} $gap={15}>
                <svg width="11" height="6" viewBox="0 0 11 6" fill="none" stroke="#5a5a5a" strokeWidth="1.2"><path d="M2 5.3L6.4 .9L10.8 5.3" /></svg>
                Object list
              </ObjectRow>
              <ObjectRow $height={40} $gap={17}>
                <svg width="16" height="14" viewBox="-2 0 16 14"><PencilIcon /></svg>
                CE3E3V2_Cute_Fox_2
              </ObjectRow>
              <ObjectRow $height={13} $gap={0}>74.1 x 38.3 x 60.4 mm</ObjectRow>
              <CubeRow>
                <CubeFrame face="iso" />
                <CubeFrame face="front" />
                <CubeFrame face="top" />
                <CubeFrame face="right" flip />
                <CubeFrame face="right" />
              </CubeRow>
            </ObjectPanel>
            <ActionPanel>
              <EstimateRow $size={13} $bold>
                <ClockIcon />
                2 hours 32 minutes
                <ChevronSlot><InfoIcon /></ChevronSlot>
              </EstimateRow>
              <EstimateRow $size={11.2}>
                <SpoolIcon />
                16g · 5.23m
              </EstimateRow>
              <ActionButtons>
                <ActionButton>Preview</ActionButton>
                <ActionButton $primary>Save to Disk</ActionButton>
              </ActionButtons>
            </ActionPanel>
          </StageFooter>
        </Stage>
        <DesktopEdge />
        <SaveDialog />
      </Screen>
    </>
  );
}
